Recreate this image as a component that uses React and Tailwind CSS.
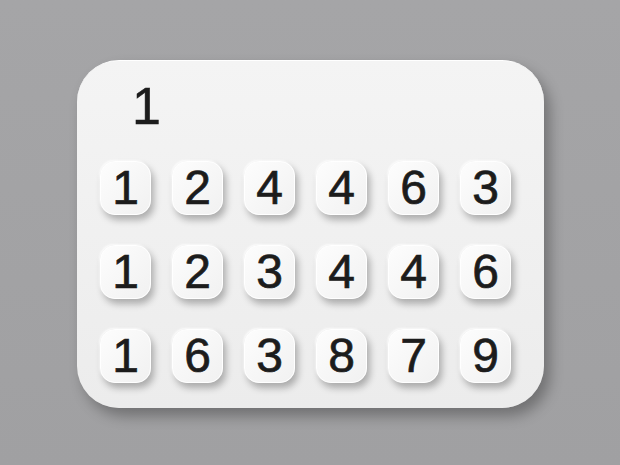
const rows = [
    ["1", "2", "4", "4", "6", "3"],
    ["1", "2", "3", "4", "4", "6"],
    ["1", "6", "3", "8", "7", "9"],
];

const Key = ({ digit }) => (
    <div className="w-[51px] h-[54px] rounded-[15px] bg-gradient-to-br from-[#fdfdfd] to-[#f1f1f1] border border-white shadow-[3px_5px_7px_rgba(0,0,0,0.28),-1px_-1px_2px_rgba(255,255,255,0.9)] flex items-center justify-center text-[48px] leading-none text-[#1c1c1c] [-webkit-text-stroke:0.7px_#1c1c1c]">
        {digit}
    </div>
);

const App = () => {
    return (
        <div className="w-[620px] h-[465px] bg-gradient-to-b from-[#a5a5a7] to-[#a0a0a2] pt-[60px] pl-[77px] font-['Liberation_Sans',Arial,sans-serif]">
            <div className="w-[467px] h-[348px] rounded-[42px] bg-gradient-to-b from-[#f4f4f4] to-[#ececec] shadow-[6px_8px_14px_rgba(0,0,0,0.3)] border-t border-white pt-[19px] pl-[23px]">
                <div className="pl-[32px] text-[52px] leading-none text-[#1c1c1c] h-[81px] [-webkit-text-stroke:0.5px_#1c1c1c]">1</div>
                <div className="flex flex-col gap-[30px]">
                    {rows.map((row, i) => (
                        <div key={i} className="flex gap-[21px]">
                            {row.map((d, j) => (
                                <Key key={j} digit={d} />
                            ))}
                        </div>
                    ))}
                </div>
            </div>
        </div>
    );
};

export default App;
